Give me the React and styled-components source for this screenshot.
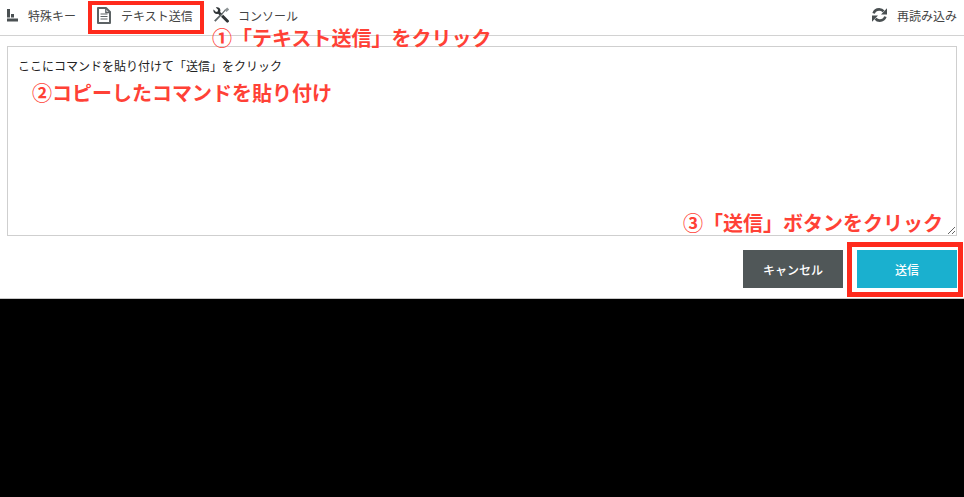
import React from "react";
import styled, { createGlobalStyle } from "styled-components";

const GlobalStyle = createGlobalStyle`
  html, body {
    margin: 0;
    padding: 0;
    height: 100%;
    background: #000;
  }
  body {
    font-family: "Liberation Sans", "Noto Sans CJK JP", sans-serif;
  }
`;

const Page = styled.div`
  position: relative;
  width: 964px;
  height: 497px;
  overflow: hidden;
`;

const Panel = styled.div`
  box-sizing: border-box;
  background: #fff;
  height: 299px;
  display: flex;
  flex-direction: column;
  border-bottom: 1px solid #c8c8c8;
`;

const Toolbar = styled.div`
  display: flex;
  align-items: center;
  height: 30px;
  padding: 0 7px 5px;
  border-bottom: 1px solid #d2d2d2;
`;

const ToolItem = styled.div`
  display: flex;
  align-items: center;
  width: ${(p) => p.$width}px;
  gap: ${(p) => p.$gap}px;
  font-size: 12px;
  color: #444;
  white-space: nowrap;
  margin-left: ${(p) => (p.$right ? "auto" : "0")};
  svg {
    flex: none;
    color: #4a5052;
  }
`;

const Body = styled.div`
  padding: 10px 7px 0;
`;

const Field = styled.textarea`
  display: block;
  box-sizing: border-box;
  width: 950px;
  height: 190px;
  margin: 0;
  padding: 12px 10px;
  border: 1px solid #cfcfcf;
  border-radius: 0;
  outline: none;
  resize: both;
  font-family: "Liberation Sans", "Noto Sans CJK JP", sans-serif;
  font-size: 12px;
  line-height: 16px;
  color: #222;
`;

const Actions = styled.div`
  display: flex;
  justify-content: flex-end;
  gap: 14px;
  padding: 14px 7px 0;
`;

const Button = styled.button`
  width: 100px;
  height: 38px;
  border: none;
  border-radius: 0;
  padding: 0;
  background: ${(p) => (p.$primary ? "#1ab0cf" : "#505758")};
  color: #fff;
  font-family: "Liberation Sans", "Noto Sans CJK JP", sans-serif;
  font-size: 12px;
  font-weight: 500;
`;

const RedBox = styled.div`
  position: absolute;
  box-sizing: border-box;
  left: ${(p) => p.$x}px;
  top: ${(p) => p.$y}px;
  width: ${(p) => p.$w}px;
  height: ${(p) => p.$h}px;
  border: ${(p) => p.$line}px solid #ff2a1c;
`;

const Note = styled.div`
  position: absolute;
  left: ${(p) => p.$x}px;
  top: ${(p) => p.$y}px;
  font-size: 20px;
  line-height: 26px;
  font-weight: 700;
  color: #ff4136;
  white-space: nowrap;
`;

const BarsIcon = () => (
  <svg width="11" height="13" viewBox="0 0 11 13" fill="currentColor">
    <rect x="0" y="0" width="3" height="8.5" />
    <rect x="4" y="5" width="3" height="3.5" />
    <rect x="0" y="9.5" width="11" height="3" />
  </svg>
);

const FileIcon = () => (
  <svg width="14" height="17" viewBox="0 0 14 17" fill="none" stroke="#5c6264">
    <path d="M1 1h8l4 4v11H1z" strokeWidth="2" strokeLinejoin="round" />
    <path d="M8.8 1.5v4h4" strokeWidth="1.3" />
    <path d="M3.5 7h7M3.5 9.5h7M3.5 12h7" strokeWidth="1.2" />
  </svg>
);

const ToolsIcon = () => (
  <svg width="17" height="16" viewBox="0 0 17 16">
    <path d="M10.2 7.8 15.6 13.2a1.2 1.2 0 0 1 0 1.7l-.4.4a1.2 1.2 0 0 1-1.7 0L8 9.8z" fill="#2f3436" />
    <path d="M.6 2.6 3 4.9l1.7-.4.4-1.7L2.8.5C5 -.3 7.3 1 7.4 3.3c0 .6-.1 1.2-.3 1.6l2.4 2.3-2 2-2.4-2.4C2.6 7.7 -.4 5.6.6 2.6z" fill="#2f3436" />
    <path d="M9.6 5.2 12.2 2.2l.9.9L7.5 9.4 2.5 14.8l-1.4-1.3L6.6 8z" fill="#5f6668" />
    <path d="M11.5 3 14.2.4l2 2-2.7 2.7z" fill="#8d9395" />
  </svg>
);

const RefreshIcon = () => (
  <svg width="17" height="16" viewBox="0 0 17 16" fill="none">
    <path d="M2.6 6.3C3.4 3.9 5.6 2.4 8.2 2.4c1.8 0 3.3.7 4.3 2" stroke="currentColor" strokeWidth="2.6" />
    <path d="M16 1.2v6.2h-6z" fill="currentColor" />
    <path d="M14.4 9.7c-.8 2.4-3 3.9-5.6 3.9-1.8 0-3.3-.7-4.3-2" stroke="currentColor" strokeWidth="2.6" />
    <path d="M1 14.8V8.6h6z" fill="currentColor" />
  </svg>
);

export default function App() {
  return (
    <Page>
      <GlobalStyle />
      <Panel>
        <Toolbar>
          <ToolItem $width={90} $gap={10}>
            <BarsIcon />
            特殊キー
          </ToolItem>
          <ToolItem $width={116} $gap={10}>
            <FileIcon />
            テキスト送信
          </ToolItem>
          <ToolItem $width={100} $gap={8}>
            <ToolsIcon />
            コンソール
          </ToolItem>
          <ToolItem $right $width={86} $gap={9}>
            <RefreshIcon />
            再読み込み
          </ToolItem>
        </Toolbar>
        <Body>
          <Field defaultValue="ここにコマンドを貼り付けて「送信」をクリック" />
        </Body>
        <Actions>
          <Button>キャンセル</Button>
          <Button $primary>送信</Button>
        </Actions>
      </Panel>
      <RedBox $x={88} $y={1} $w={116} $h={33} $line={4} />
      <RedBox $x={847} $y={242} $w={116} $h={55} $line={5} />
      <Note $x={212} $y={26}>①「テキスト送信」をクリック</Note>
      <Note $x={32} $y={81}>②コピーしたコマンドを貼り付け</Note>
      <Note $x={683} $y={211}>③「送信」ボタンをクリック</Note>
    </Page>
  );
}
